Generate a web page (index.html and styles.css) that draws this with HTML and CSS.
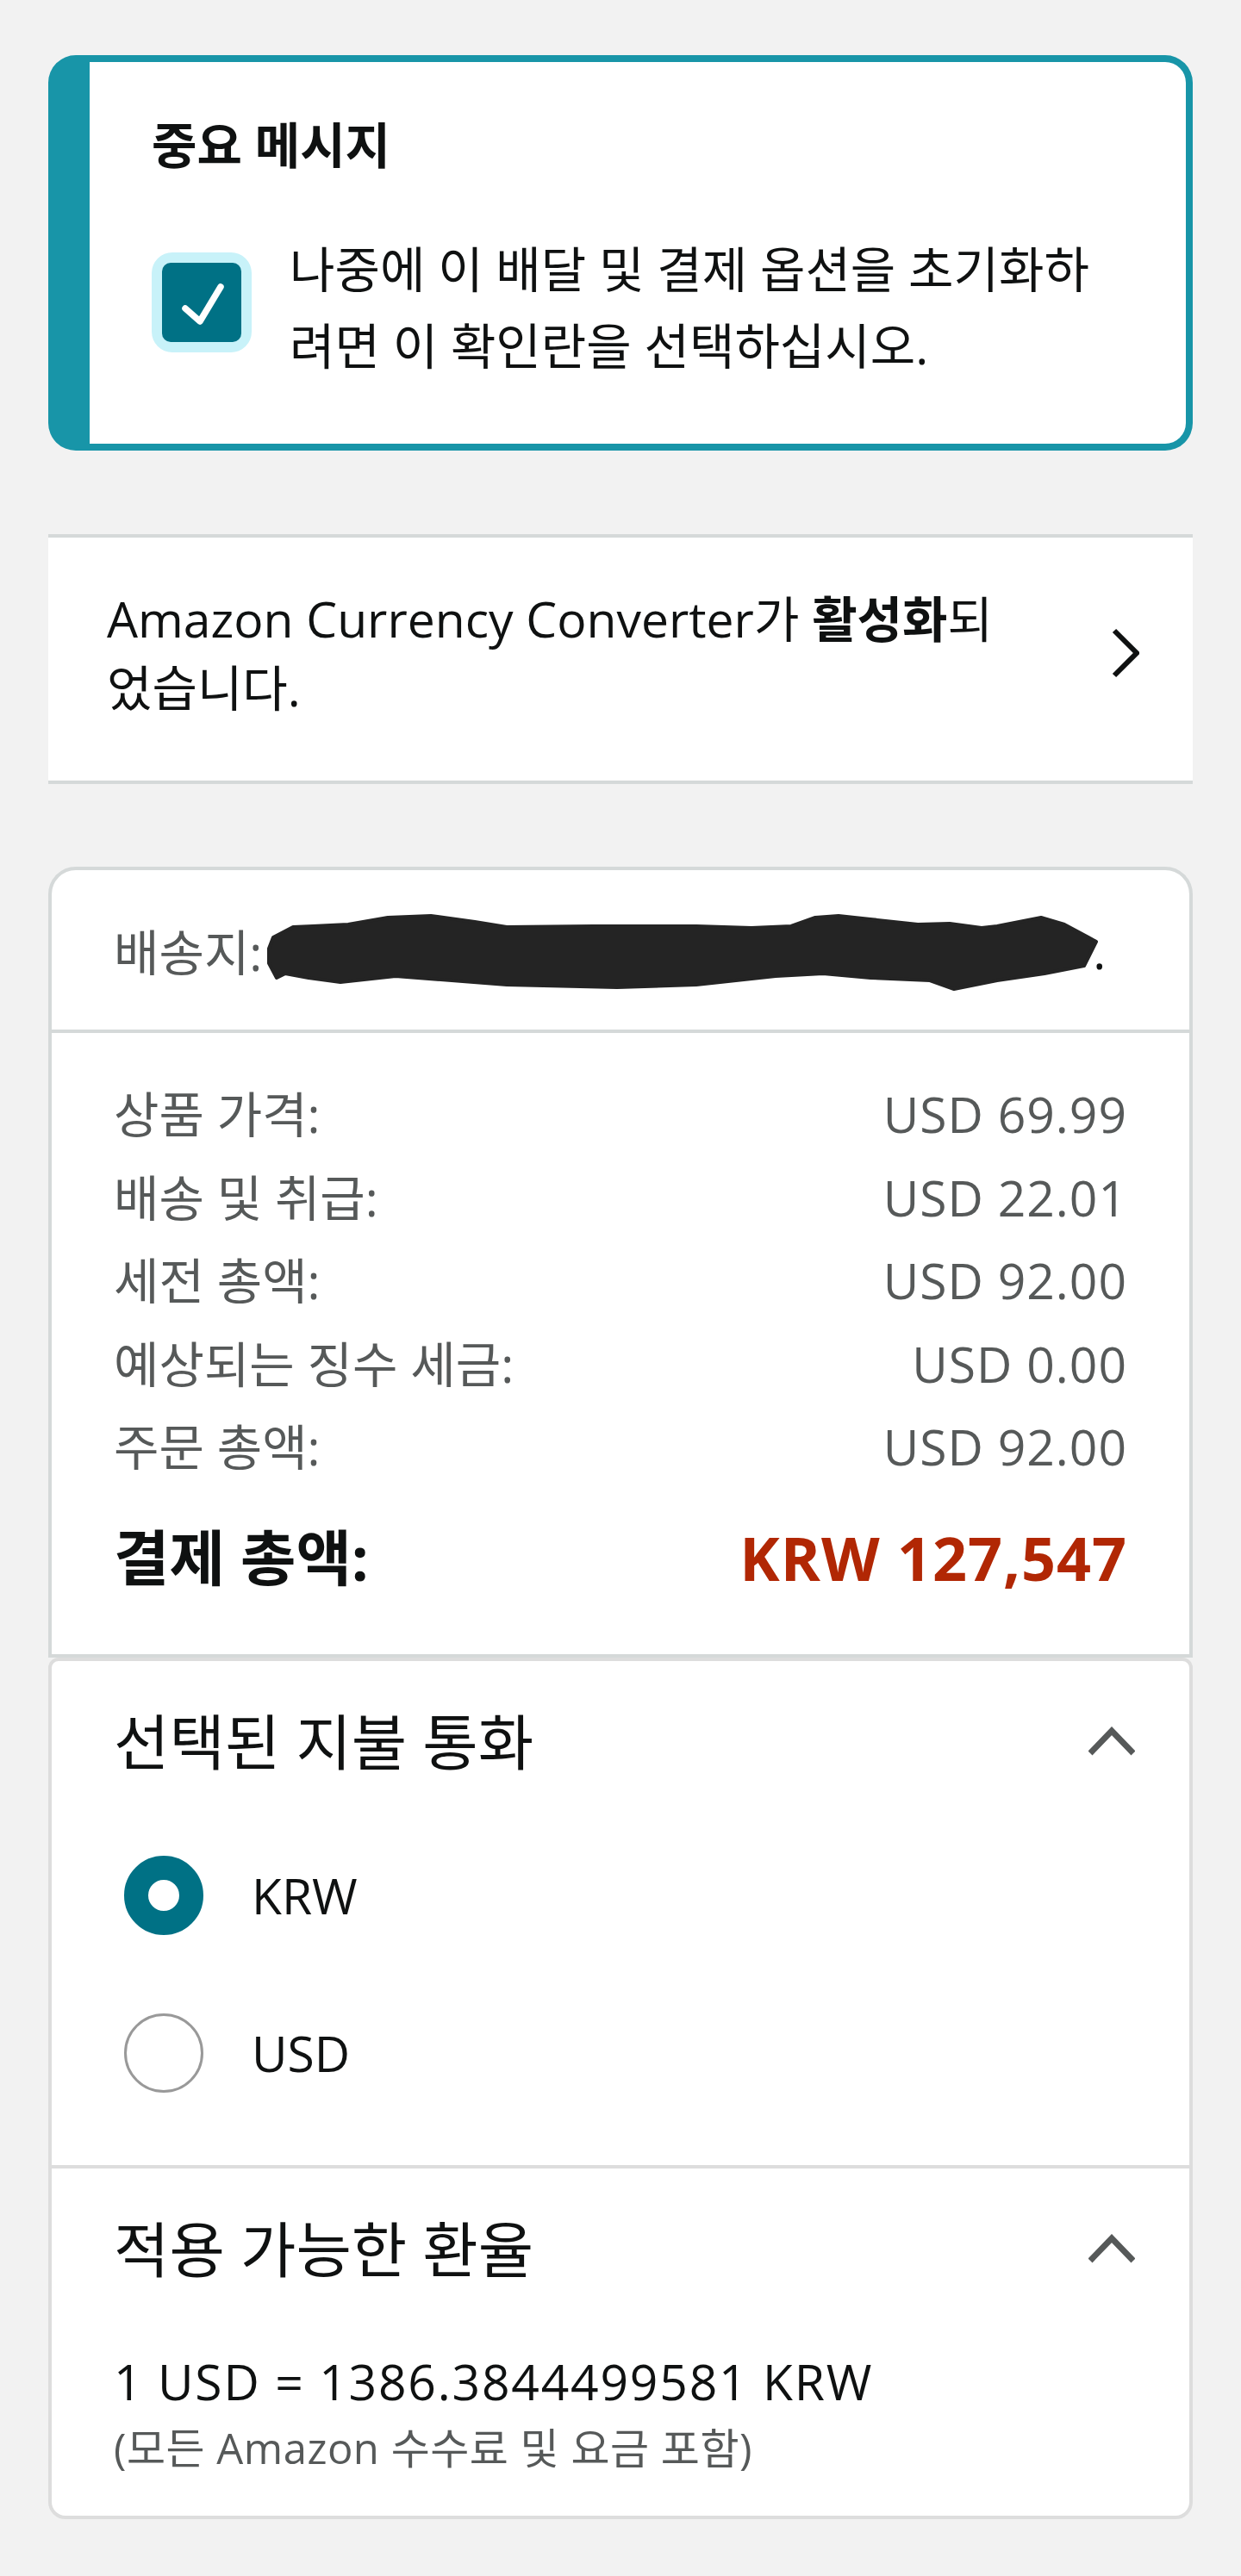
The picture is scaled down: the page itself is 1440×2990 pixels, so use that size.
FILE: index.html
```html
<!DOCTYPE html>
<html lang="ko">
<head>
<meta charset="utf-8">
<title>결제</title>
<link rel="stylesheet" href="styles.css">
</head>
<body>
<div class="page">
  <section class="notice">
    <h2 class="notice-title">중요 메시지</h2>
    <div class="notice-body">
      <span class="checkbox">
        <span class="checkbox-box">
          <svg class="check" width="92" height="92" viewBox="0 0 92 92"><polyline points="27,53 44,68 68,28" fill="none" stroke="#ffffff" stroke-width="7.5" stroke-linecap="round" stroke-linejoin="round"/></svg>
        </span>
      </span>
      <p class="notice-text">나중에 이 배달 및 결제 옵션을 초기화하려면 이 확인란을 선택하십시오.</p>
    </div>
  </section>

  <div class="converter">
    <p class="converter-text">Amazon Currency Converter가 <b>활성화</b>되<br>었습니다.</p>
    <svg class="chev-right" width="32" height="60" viewBox="0 0 32 60"><polyline points="3,4 29,30 3,56" fill="none" stroke="#0f1111" stroke-width="6"/></svg>
  </div>

  <section class="summary">
    <div class="ship">
      <span class="ship-label">배송지:</span>
      <svg class="redact" width="970" height="92" viewBox="0 0 970 92"><path d="M4,41 L9,28 L32,16 L55,15 L96,13 L142,5 L192,3 L243,10 L280,16 L381,15 L500,15 L564,17 L610,15 L638,5 L665,3 L702,7 L757,13 L794,12 L831,17 L849,15 L900,5 L927,13 L955,28 L964,33 L950,61 L904,70 L849,78 L799,88 L771,78 L702,75 L647,70 L592,73 L500,83 L408,86 L280,83 L151,73 L87,80 L50,75 L23,70 L13,75 L4,58 Z" fill="#242424" stroke="#242424" stroke-width="4" stroke-linejoin="round"/></svg>
      <span class="ship-dot">.</span>
    </div>
    <div class="rows">
      <div class="row"><span>상품 가격:</span><span class="val">USD 69.99</span></div>
      <div class="row"><span>배송 및 취급:</span><span class="val">USD 22.01</span></div>
      <div class="row"><span>세전 총액:</span><span class="val">USD 92.00</span></div>
      <div class="row"><span>예상되는 징수 세금:</span><span class="val">USD 0.00</span></div>
      <div class="row"><span>주문 총액:</span><span class="val">USD 92.00</span></div>
      <div class="row total"><span>결제 총액:</span><span class="total-amt">KRW 127,547</span></div>
    </div>
  </section>

  <section class="currency">
    <div class="cur-sec">
      <div class="cur-head">
        <h3 class="cur-title">선택된 지불 통화</h3>
        <svg class="chev-up" width="54" height="36" viewBox="0 0 54 36"><polyline points="2,31 27,5 52,31" fill="none" stroke="#565959" stroke-width="7"/></svg>
      </div>
      <div class="radios">
        <div class="radio-row"><span class="radio on"></span><span class="radio-label">KRW</span></div>
        <div class="radio-row"><span class="radio"></span><span class="radio-label">USD</span></div>
      </div>
    </div>
    <div class="cur-sec rate-sec">
      <div class="cur-head">
        <h3 class="cur-title">적용 가능한 환율</h3>
        <svg class="chev-up" width="54" height="36" viewBox="0 0 54 36"><polyline points="2,31 27,5 52,31" fill="none" stroke="#565959" stroke-width="7"/></svg>
      </div>
      <p class="rate">1 USD = 1386.3844499581 KRW</p>
      <p class="rate-note">(모든 Amazon 수수료 및 요금 포함)</p>
    </div>
  </section>
</div>
</body>
</html>
```

FILE: styles.css
```css
html, body {
  margin: 0;
  padding: 0;
}
body {
  background: #f2f2f2;
  font-family: "Open Sans", "Noto Sans CJK KR", sans-serif;
  color: #0f1111;
  font-size: 57px;
}
.page {
  padding: 64px 56px 0;
}

/* Notice */
.notice {
  background: #ffffff;
  border: 8px solid #1895a8;
  border-left-width: 48px;
  border-radius: 32px;
  padding: 54px 90px 69px 72px;
}
.notice-title {
  margin: 0;
  font-size: 57px;
  line-height: 84px;
  font-weight: 700;
}
.notice-body {
  display: flex;
  align-items: flex-start;
  gap: 44px;
  margin-top: 58px;
}
.checkbox {
  flex: none;
  margin-top: 25px;
  width: 116px;
  height: 116px;
  border-radius: 24px;
  background: #c8f2f9;
  display: flex;
  align-items: center;
  justify-content: center;
}
.checkbox-box {
  width: 92px;
  height: 92px;
  border-radius: 10px;
  background: #007185;
  display: block;
}
.check {
  display: block;
}
.notice-text {
  flex: 1;
  margin: 0;
  font-size: 57px;
  line-height: 89px;
}

/* Currency converter */
.converter {
  margin-top: 97px;
  background: #ffffff;
  border-top: 4px solid #d5d9d9;
  border-bottom: 4px solid #d5d9d9;
  display: flex;
  align-items: center;
  gap: 93px;
  padding: 54px 62px 68px 68px;
}
.converter-text {
  flex: 1;
  margin: 0;
  font-size: 57px;
  line-height: 80px;
}
.converter-text b {
  font-weight: 700;
}
.chev-right {
  flex: none;
  display: block;
}

/* Summary card */
.summary {
  margin-top: 96px;
  background: #ffffff;
  border: 4px solid #d5d9d9;
  border-radius: 32px 32px 0 0;
}
.ship {
  height: 185px;
  padding: 0 72px;
  display: flex;
  align-items: center;
  border-bottom: 4px solid #d5d9d9;
  color: #565959;
  font-size: 57px;
  white-space: nowrap;
}
.redact {
  flex: none;
  display: block;
  margin-left: 4px;
  margin-top: 6px;
}
.ship-dot {
  margin-left: -10px;
  color: #0f1111;
}
.rows {
  padding: 46px 72px 62.5px;
}
.row {
  display: flex;
  justify-content: space-between;
  line-height: 96.5px;
  font-size: 57px;
  color: #565959;
}
.val {
  letter-spacing: 1px;
}
.row.total {
  margin-top: 30px;
  line-height: 100px;
  font-size: 70px;
  font-weight: 700;
  color: #0f1111;
}
.total-amt {
  color: #b12704;
  letter-spacing: 1px;
}

/* Currency selection card */
.currency {
  background: #ffffff;
  border: 4px solid #dddddd;
  border-radius: 12px 12px 20px 20px;
}
.cur-sec {
  padding: 49px 63px 84px 72px;
}
.cur-sec + .cur-sec {
  border-top: 4px solid #dddddd;
}
.rate-sec {
  padding-bottom: 40px;
}
.cur-head {
  height: 90px;
  display: flex;
  align-items: center;
  justify-content: space-between;
}
.cur-title {
  margin: 0;
  font-size: 70px;
  line-height: 90px;
  font-weight: 400;
}
.chev-up {
  display: block;
  flex: none;
}
.radios {
  margin-top: 87px;
  display: flex;
  flex-direction: column;
  gap: 91px;
}
.radio-row {
  display: flex;
  align-items: center;
  height: 92px;
  gap: 56px;
  font-size: 57px;
}
.radio {
  flex: none;
  margin-left: 12px;
  width: 92px;
  height: 92px;
  box-sizing: border-box;
  border-radius: 50%;
  border: 3px solid #999999;
  background: #ffffff;
}
.radio.on {
  border: 28px solid #007185;
}
.rate {
  margin: 70px 0 0;
  font-size: 57px;
  line-height: 77px;
  letter-spacing: 1.8px;
}
.rate-note {
  margin: 0;
  font-size: 49px;
  line-height: 77px;
  color: #565959;
  letter-spacing: 0.5px;
}
```
